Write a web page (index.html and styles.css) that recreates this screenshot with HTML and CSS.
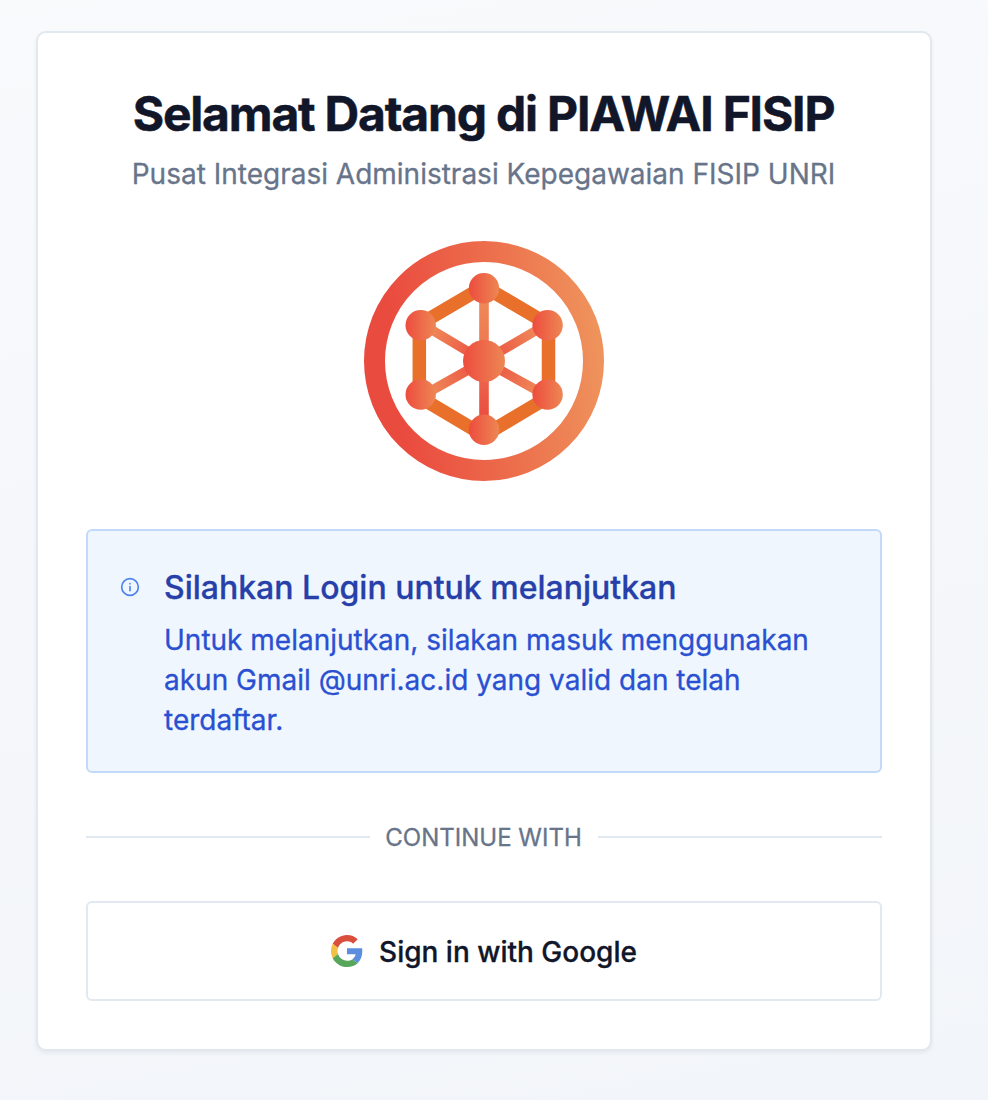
FILE: index.html
```
<!DOCTYPE html>
<html lang="id">
<head>
<meta charset="utf-8">
<title>PIAWAI FISIP</title>
<link rel="stylesheet" href="styles.css">
</head>
<body>
<main class="card">
  <header class="header">
    <h1 class="title">Selamat Datang di PIAWAI FISIP</h1>
    <p class="subtitle">Pusat Integrasi Administrasi Kepegawaian FISIP UNRI</p>
  </header>
  <svg class="logo" viewBox="0 0 240 240" aria-hidden="true">
    <defs>
      <linearGradient id="ring" x1="0" y1="0.12" x2="1" y2="0"><stop offset="0.05" stop-color="#ea4b3f"/><stop offset="0.5" stop-color="#ec6c4b"/><stop offset="0.98" stop-color="#ef935c"/></linearGradient>
      <linearGradient id="node"><stop offset="0" stop-color="#ed4c3e"/><stop offset="1" stop-color="#ed8754"/></linearGradient>
      <linearGradient id="up" gradientUnits="userSpaceOnUse" x1="0" y1="60" x2="0" y2="100"><stop offset="0" stop-color="#ef8858"/><stop offset="1" stop-color="#ee7a51"/></linearGradient>
      <linearGradient id="down" gradientUnits="userSpaceOnUse" x1="0" y1="140" x2="0" y2="175"><stop offset="0" stop-color="#ec6349"/><stop offset="1" stop-color="#ea4d3f"/></linearGradient>
      <radialGradient id="spoke" gradientUnits="userSpaceOnUse" cx="120" cy="120" r="68"><stop offset="0.3" stop-color="#ec5f48"/><stop offset="0.85" stop-color="#ef8556"/></radialGradient>
    </defs>
    <circle cx="120" cy="120" r="109.5" fill="none" stroke="url(#ring)" stroke-width="21"/>
    <path d="M120 45.5 184.5 83.5V156L120 194.5 55.3 156V83.5Z" fill="none" stroke="#e8702a" stroke-width="13.5"/>
    <g fill="none" stroke="url(#spoke)" stroke-width="9.5"><path d="M57 82.5 120 120 184 82.5"/><path d="M57 155.5 120 120 184 155.5"/></g>
    <path d="M115.2 47h9.6v73h-9.6z" fill="url(#up)"/>
    <path d="M115.2 120h9.6v69h-9.6z" fill="url(#down)"/>
    <g fill="url(#node)">
      <circle cx="120" cy="47.2" r="15.2"/><circle cx="183.6" cy="84.2" r="15.2"/><circle cx="183.6" cy="153.5" r="15.2"/>
      <circle cx="120" cy="188.7" r="15.2"/><circle cx="56.7" cy="153.5" r="15.2"/><circle cx="56.7" cy="84.2" r="15.2"/>
      <circle cx="120" cy="120" r="21"/>
    </g>
  </svg>
  <section class="alert">
    <svg class="info" viewBox="0 0 24 24" aria-hidden="true"><circle cx="12" cy="12" r="10"/><path d="M12 16.5v-5M12 8h.01"/></svg>
    <div class="alert-body">
      <h2 class="alert-title">Silahkan Login untuk melanjutkan</h2>
      <p class="alert-text">Untuk melanjutkan, silakan masuk menggunakan akun Gmail @unri.ac.id yang valid dan telah terdaftar.</p>
    </div>
  </section>
  <div class="divider"><span>Continue with</span></div>
  <button class="google" type="button">
    <svg class="google-icon" viewBox="0 0 48 48" aria-hidden="true">
      <path fill="#d94f3d" d="M24 9.5c3.54 0 6.71 1.22 9.21 3.6l6.85-6.85C35.9 2.38 30.47 0 24 0 14.62 0 6.51 5.38 2.56 13.22l7.98 6.19C12.43 13.72 17.74 9.5 24 9.5z"/>
      <path fill="#5b8ede" d="M46.98 24.55c0-1.57-.15-3.09-.38-4.55H24v9.02h12.94c-.58 2.96-2.26 5.48-4.78 7.18l7.73 6c4.51-4.18 7.09-10.36 7.09-17.65z"/>
      <path fill="#f2c042" d="M10.53 28.59c-.48-1.45-.76-2.99-.76-4.59s.27-3.14.76-4.59l-7.98-6.19C.92 16.46 0 20.12 0 24s.92 7.54 2.56 10.78l7.97-6.19z"/>
      <path fill="#58a65c" d="M24 48c6.48 0 11.93-2.13 15.89-5.81l-7.73-6c-2.15 1.45-4.92 2.3-8.16 2.3-6.26 0-11.57-4.22-13.47-9.91l-7.98 6.19C6.51 42.62 14.62 48 24 48z"/>
    </svg>
    <span>Sign in with Google</span>
  </button>
</main>
</body>
</html>
```
FILE: styles.css
```
* { box-sizing: border-box; }
body {
  margin: 0;
  min-height: 1100px;
  padding: 31px 56px 49px 36px;
  font-family: Inter, "Liberation Sans", sans-serif;
  background: linear-gradient(170deg, #f8fafc, #f2f5f9);
  -webkit-text-stroke: 0.3px;
}
h1, h2, p { margin: 0; }
.card {
  display: flex;
  flex-direction: column;
  gap: 48px;
  width: 896px;
  padding: 48px;
  background: #fff;
  border: 2px solid #e2e8f0;
  border-radius: 10px;
  box-shadow: 0 2px 4px rgba(15, 23, 42, .06);
}
.header {
  display: grid;
  gap: 8px;
  margin-bottom: -1px;
  padding: 1px 1px 0 0;
  text-align: center;
}
.title {
  font-size: 48px;
  line-height: 64px;
  font-weight: 700;
  letter-spacing: -0.025em;
  color: #111629;
  white-space: nowrap;
  -webkit-text-stroke: 0.5px;
}
.subtitle { font-size: 28px; line-height: 40px; color: #67748a; white-space: nowrap; }
.logo { width: 240px; height: 240px; align-self: center; }
.alert {
  display: flex;
  gap: 24px;
  padding: 32px;
  border: 2px solid #c2daf9;
  border-radius: 6px;
  background: #eff6fe;
}
.alert-body { margin-bottom: -1px; padding-top: 1px; }
.info {
  flex: none;
  width: 20px;
  height: 20px;
  margin-top: 14px;
  fill: none;
  stroke: #4f84ee;
  stroke-width: 2;
  stroke-linecap: round;
}
.alert-title { margin-bottom: 8px; font-size: 32px; line-height: 48px; font-weight: 500; color: #263fa9; }
.alert-text { font-size: 28px; line-height: 40px; color: #2a50d2; }
.divider {
  display: flex;
  align-items: center;
  gap: 16px;
  height: 32px;
  font-size: 24px;
  line-height: 32px;
  text-transform: uppercase;
  color: #67748a;
}
.divider span { padding-top: 2px; margin-left: -1px; }
.divider::before, .divider::after { content: ""; flex: 1; height: 2px; background: #e2e8f0; }
.google {
  display: flex;
  align-items: center;
  justify-content: center;
  gap: 16px;
  height: 100px;
  padding: 0;
  border: 2px solid #e2e8f0;
  border-radius: 6px;
  background: #fff;
  font: 500 28px/40px Inter, "Liberation Sans", sans-serif;
  color: #111629;
}
.google span { padding-top: 2px; }
.google-icon { width: 32px; height: 32px; }
```
